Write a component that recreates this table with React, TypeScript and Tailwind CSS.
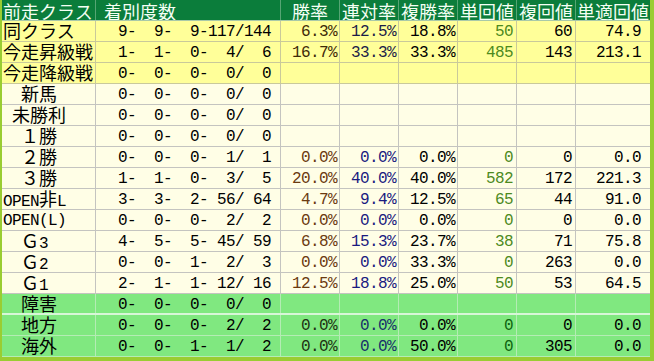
import React from "react";

type Tone = "yellow" | "cream" | "green";

type Row = {
  label: React.ReactNode;
  nums: number[];
  stats?: string[];
  tone: Tone;
  sep?: boolean;
};

const mono = "font-['Liberation_Mono',monospace] text-[16px] tracking-[-0.6px]";
const cjk = "font-['Noto_Sans_CJK_JP',sans-serif] text-[18px] tracking-normal";

// Japanese part of a label, set on the same baseline as the digits
const J = ({ children }: { children: React.ReactNode }) => (
  <span className={`${cjk} leading-[16px]`}>{children}</span>
);

const rows: Row[] = [
  { label: <J>同クラス</J>, nums: [9, 9, 9, 117, 144], stats: ["6.3%", "12.5%", "18.8%", "50", "60", "74.9"], tone: "yellow" },
  { label: <J>今走昇級戦</J>, nums: [1, 1, 0, 4, 6], stats: ["16.7%", "33.3%", "33.3%", "485", "143", "213.1"], tone: "yellow" },
  { label: <J>今走降級戦</J>, nums: [0, 0, 0, 0, 0], tone: "yellow" },
  { label: <J>　新馬</J>, nums: [0, 0, 0, 0, 0], tone: "cream" },
  { label: <> <J>未勝利</J></>, nums: [0, 0, 0, 0, 0], tone: "cream" },
  { label: <J>　１勝</J>, nums: [0, 0, 0, 0, 0], tone: "cream" },
  { label: <J>　２勝</J>, nums: [0, 0, 0, 1, 1], stats: ["0.0%", "0.0%", "0.0%", "0", "0", "0.0"], tone: "cream" },
  { label: <J>　３勝</J>, nums: [1, 1, 0, 3, 5], stats: ["20.0%", "40.0%", "40.0%", "582", "172", "221.3"], tone: "cream" },
  { label: <>OPEN<J>非</J>L</>, nums: [3, 3, 2, 56, 64], stats: ["4.7%", "9.4%", "12.5%", "65", "44", "91.0"], tone: "cream" },
  { label: "OPEN(L)", nums: [0, 0, 0, 2, 2], stats: ["0.0%", "0.0%", "0.0%", "0", "0", "0.0"], tone: "cream" },
  { label: <><J>　Ｇ</J>3</>, nums: [4, 5, 5, 45, 59], stats: ["6.8%", "15.3%", "23.7%", "38", "71", "75.8"], tone: "cream" },
  { label: <><J>　Ｇ</J>2</>, nums: [0, 0, 1, 2, 3], stats: ["0.0%", "0.0%", "33.3%", "0", "263", "0.0"], tone: "cream" },
  { label: <><J>　Ｇ</J>1</>, nums: [2, 1, 1, 12, 16], stats: ["12.5%", "18.8%", "25.0%", "50", "53", "64.5"], tone: "cream" },
  { label: <J>　障害</J>, nums: [0, 0, 0, 0, 0], tone: "green", sep: true },
  { label: <J>　地方</J>, nums: [0, 0, 0, 2, 2], stats: ["0.0%", "0.0%", "0.0%", "0", "0", "0.0"], tone: "green" },
  { label: <J>　海外</J>, nums: [0, 0, 1, 1, 2], stats: ["0.0%", "0.0%", "50.0%", "0", "305", "0.0"], tone: "green" },
];

const toneBg: Record<Tone, string> = {
  yellow: "bg-[#ffff99] border-[#c9c99a]",
  cream: "bg-[#fffee6] border-[#c4c4c0]",
  green: "bg-[#80e880] border-[#b4ecb4]",
};

// text colour of each stat column, by row tone
const statColor: Record<Tone, string[]> = {
  yellow: ["text-[#3e2a08]", "text-[#1c1c48]", "text-black", "text-[#4d8a1e]", "text-black", "text-black"],
  cream: ["text-[#6b3a10]", "text-[#1a1a80]", "text-black", "text-[#4d8a1e]", "text-black", "text-black"],
  green: ["text-[#1e3212]", "text-[#17306a]", "text-black", "text-[#0e6410]", "text-black", "text-black"],
};

const cols = "grid grid-cols-[94px_185px_59px_59px_59px_59px_59px_74px]";

const pad = (n: number) => String(n).padStart(3, " ");

const App = () => {
  const headers = ["勝率", "連対率", "複勝率", "単回値", "複回値", "単適回値"];

  return (
    <div className="w-[654px] h-[361px] bg-[#9acd32] pl-[2px] pr-[4px] pb-[4px] overflow-hidden">
      {/* Header */}
      <div className={`${cols} h-[21px] bg-[#0b7d3b] border-b border-[#a9c9a9] text-[#f4fff4] ${cjk} leading-[20px]`}>
        <div className="border-r border-[#56a574] pl-px pt-px whitespace-nowrap overflow-hidden">前走クラス</div>
        <div className="border-r border-[#56a574] pl-[8px] pt-px overflow-hidden">着別度数</div>
        {headers.map((h, i) => (
          <div
            key={h}
            className={`text-center whitespace-nowrap pt-px overflow-hidden ${i < 5 ? "border-r border-[#56a574]" : ""}`}
          >
            {h}
          </div>
        ))}
      </div>

      {/* Rows */}
      {rows.map((r, idx) => (
        <div
          key={idx}
          className={`${cols} h-[21px] ${toneBg[r.tone]} ${r.sep ? "border-b-2 border-b-[#d8f6d8]" : "border-b"} text-black`}
        >
          <div className={`${mono} leading-[20px] pt-px whitespace-pre overflow-hidden border-r ${toneBg[r.tone]} pl-px`}>
            {r.label}
          </div>
          <div className={`${mono} leading-[20px] pt-px whitespace-pre overflow-hidden border-r ${toneBg[r.tone]} pl-[4px]`}>
            {`${pad(r.nums[0])}-${pad(r.nums[1])}-${pad(r.nums[2])}-${pad(r.nums[3])}/${pad(r.nums[4])}`}
          </div>
          {Array.from({ length: 6 }).map((_, i) => (
            <div
              key={i}
              className={`${mono} leading-[20px] pt-px overflow-hidden text-right ${statColor[r.tone][i]} ${
                i < 5 ? `border-r ${toneBg[r.tone]}` : ""
              } ${i === 5 ? "pr-[9px]" : i >= 3 ? "pr-[3px]" : "pr-[2px]"}`}
            >
              {r.stats ? r.stats[i] : ""}
            </div>
          ))}
        </div>
      ))}
    </div>
  );
};

export default App;
